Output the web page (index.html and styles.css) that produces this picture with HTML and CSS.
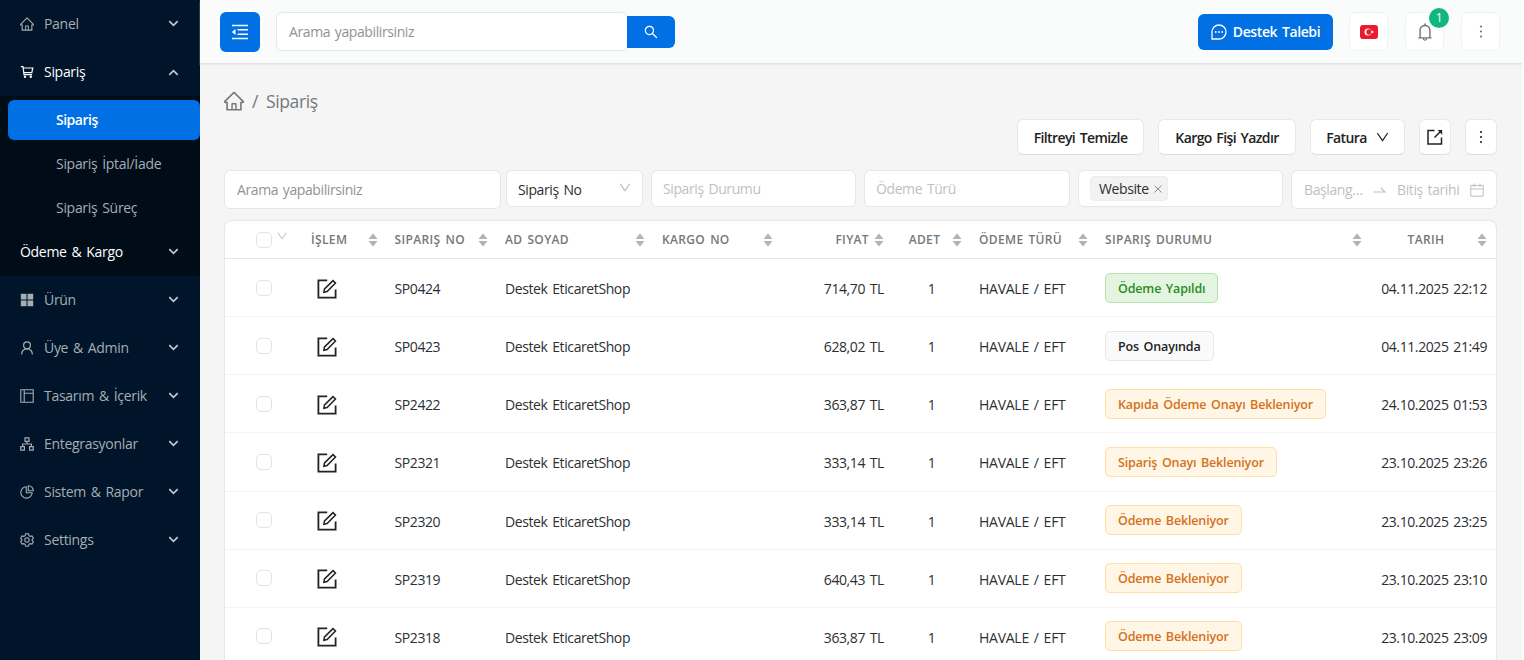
FILE: index.html
```
<!DOCTYPE html>
<html lang="tr">
<head>
  <meta charset="UTF-8" />
  <title>Sipariş</title>
  <link rel="stylesheet" href="styles.css">
</head>
<body>
  <!-- Shared icons -->
  <svg class="sprite">
    <symbol id="home" viewBox="64 64 896 896"><path fill="currentColor" d="M946.5 505L560.1 118.8l-25.9-25.9a31.5 31.5 0 00-44.4 0L77.5 505a63.9 63.9 0 00-18.8 46c.4 35.2 29.7 63.3 64.9 63.3h42.5V940h691.8V614.3h43.4c17.1 0 33.2-6.7 45.3-18.8a63.6 63.6 0 0018.7-45.3c0-17-6.7-33.1-18.8-45.2zM568 868H456V664h112v204zm217.9-325.7V868H632V640c0-22.1-17.9-40-40-40H432c-22.1 0-40 17.9-40 40v228H238.1V542.3h-96l370-369.7 23.1 23.1L882 542.3h-96.1z"/></symbol>
    <symbol id="search" viewBox="64 64 896 896"><path fill="currentColor" d="M909.6 854.5L649.9 594.8C690.2 542.7 712 479 712 412c0-80.2-31.3-155.4-87.9-212.1-56.6-56.7-132-87.9-212.1-87.9s-155.5 31.3-212.1 87.9C143.2 256.5 112 331.8 112 412c0 80.1 31.3 155.5 87.9 212.1C256.5 680.8 331.8 712 412 712c67 0 130.6-21.8 182.7-62l259.7 259.6a8.2 8.2 0 0011.6 0l43.6-43.5a8.2 8.2 0 000-11.6zM570.4 570.4C528 612.7 471.8 636 412 636s-116-23.3-158.4-65.6C211.3 528 188 471.8 188 412s23.3-116.1 65.6-158.4C296 211.3 352.2 188 412 188s116.1 23.2 158.4 65.6S636 352.2 636 412s-23.3 116.1-65.6 158.4z"/></symbol>
    <symbol id="bell" viewBox="64 64 896 896"><path fill="currentColor" d="M816 768h-24V428c0-141.1-104.3-257.8-240-277.2V112c0-22.1-17.9-40-40-40s-40 17.9-40 40v38.8C336.3 170.2 232 286.9 232 428v340h-24c-17.7 0-32 14.3-32 32v32c0 4.4 3.6 8 8 8h216c0 61.8 50.2 112 112 112s112-50.2 112-112h216c4.4 0 8-3.6 8-8v-32c0-17.7-14.3-32-32-32zM512 888c-26.5 0-48-21.5-48-48h96c0 26.5-21.5 48-48 48zM304 768V428c0-55.6 21.6-107.8 60.9-147.1S456.4 220 512 220c55.6 0 107.8 21.6 147.1 60.9S720 372.4 720 428v340H304z"/></symbol>
    <symbol id="chevron" viewBox="0 0 10 7"><path class="line" stroke-width="1.7" d="M.8 1.2 5 5.3 9.2 1.2"/></symbol>
    <symbol id="down" viewBox="0 0 12 10"><path class="line" stroke-width="1.2" d="M.8 1 6 8.6 11.2 1"/></symbol>
    <symbol id="more" viewBox="0 0 4 14"><g fill="currentColor"><circle cx="2" cy="2" r="1.1"/><circle cx="2" cy="7" r="1.1"/><circle cx="2" cy="12" r="1.1"/></g></symbol>
    <symbol id="edit" viewBox="0 0 20 20"><path class="line" stroke-width="1.8" d="M10.2 1.4H1.4v17.2h17.2V10.4"/><path class="line" stroke-width="1.5" d="M6.9 13.2 7.5 9.9 16 1.6 18.5 4 10.1 12.6Z"/></symbol>
    <symbol id="sorter" viewBox="0 0 10 14"><path fill="currentColor" d="M5 .5 9.5 6H.5zM5 13.5.5 8h9z"/></symbol>
  </svg>

  <aside class="sidebar">
    <div class="menu-item">
      <svg class="menu-icon"><use href="#home"/></svg>
      <span>Panel</span>
      <svg class="arrow"><use href="#chevron"/></svg>
    </div>
    <div class="menu-item open">
      <svg class="menu-icon" viewBox="0 0 14 14"><path class="line" stroke-width="1.2" d="M.8 1.6H3l1 8h8.1M3.2 3h9.6l-1 4.6H3.8"/><circle fill="currentColor" cx="5" cy="11.8" r="1.2"/><circle fill="currentColor" cx="10.8" cy="11.8" r="1.2"/></svg>
      <span>Sipariş</span>
      <svg class="arrow"><use href="#chevron"/></svg>
    </div>
    <div class="submenu">
      <a class="active">Sipariş</a>
      <a>Sipariş İptal/İade</a>
      <a>Sipariş Süreç</a>
      <div class="menu-item group">
        <span>Ödeme &amp; Kargo</span>
        <svg class="arrow"><use href="#chevron"/></svg>
      </div>
    </div>
    <div class="menu-item">
      <svg class="menu-icon" viewBox="0 0 14 14"><path fill="currentColor" d="M.8.8h5.700v5.700H.8zM7.500.8h5.700v5.700H7.500zM.8 7.500h5.700v5.700H.8zM7.500 7.500h5.700v5.700H7.500z"/></svg>
      <span>Ürün</span>
      <svg class="arrow"><use href="#chevron"/></svg>
    </div>
    <div class="menu-item">
      <svg class="menu-icon" viewBox="0 0 14 14"><circle class="line" stroke-width="1.200" cx="7" cy="4.300" r="3.400"/><path class="line" stroke-width="1.200" d="M1.600 13.500C1.800 10 4 7.800 7 7.800s5.200 2.200 5.400 5.700"/></svg>
      <span>Üye &amp; Admin</span>
      <svg class="arrow"><use href="#chevron"/></svg>
    </div>
    <div class="menu-item">
      <svg class="menu-icon" viewBox="0 0 14 14"><path class="line" stroke-width="1.100" d="M.8.8h12.400v12.400H.8zM4.200.8v12.400M4.200 4.200h9"/></svg>
      <span>Tasarım &amp; İçerik</span>
      <svg class="arrow"><use href="#chevron"/></svg>
    </div>
    <div class="menu-item">
      <svg class="menu-icon" viewBox="0 0 14 14"><path class="line" stroke-width="1.200" d="M5 .8h4v3.600H5zM.8 9.600h3.600v3.600H.8zM9.600 9.600h3.600v3.600H9.600zM7 4.400V7M2.600 9.600V7h8.800v2.600"/></svg>
      <span>Entegrasyonlar</span>
      <svg class="arrow"><use href="#chevron"/></svg>
    </div>
    <div class="menu-item">
      <svg class="menu-icon" viewBox="0 0 14 14"><path class="line" stroke-width="1.100" d="M6.300 1.700A5.700 5.700 0 1 0 12.200 7.800H6.300zM8.300.7v5h5A5 5 0 0 0 8.300.7z"/></svg>
      <span>Sistem &amp; Rapor</span>
      <svg class="arrow"><use href="#chevron"/></svg>
    </div>
    <div class="menu-item">
      <svg class="menu-icon" viewBox="0 0 14 14"><path class="line" stroke-width="1.100" d="M5.600.8h2.800l.5 1.800 1.300.8 1.800-.5 1.400 2.400L12.100 6.600v.8l1.300 1.300L12 11.100l-1.800-.5-1.300.8-.5 1.800H5.600l-.5-1.800-1.300-.8-1.800.5L.6 8.700l1.300-1.300v-.8L.6 5.300 2 2.900l1.800.5 1.300-.8z"/><circle class="line" stroke-width="1.100" cx="7" cy="7" r="2.200"/></svg>
      <span>Settings</span>
      <svg class="arrow"><use href="#chevron"/></svg>
    </div>
  </aside>

  <main class="main">
    <header class="topbar">
      <button class="toggle">
        <svg width="18" height="16" viewBox="0 0 18 16"><path class="line" stroke-width="1.500" d="M1 1.500h16M6.500 5.800H17M6.500 10.200H17M1 14.500h16"/><path fill="currentColor" d="M4.500 5v6L.8 8z"/></svg>
      </button>
      <div class="search">
        <input type="text" placeholder="Arama yapabilirsiniz" />
        <button><svg width="14" height="14"><use href="#search"/></svg></button>
      </div>
      <button class="support">
        <svg width="16" height="16" viewBox="0 0 16 16"><path class="line" stroke-width="1.300" d="M1 15V8a7 7 0 1 1 7 7z"/><g fill="currentColor"><circle cx="4.800" cy="8" r=".9"/><circle cx="8" cy="8" r=".9"/><circle cx="11.200" cy="8" r=".9"/></g></svg>
        <span>Destek Talebi</span>
      </button>
      <button class="square">
        <svg width="18" height="14" viewBox="0 0 18 14"><rect width="18" height="14" rx="3" fill="#e81c2e"/><circle cx="8" cy="7" r="3.500" fill="#fff"/><circle cx="9" cy="7" r="2.700" fill="#e81c2e"/><path fill="#fff" d="m10.300 7 1.300-.5.1-1.200.8 1 1.200-.3-.7 1 .7 1-1.200-.3-.8 1-.1-1.200z"/></svg>
      </button>
      <button class="square">
        <svg width="18" height="18"><use href="#bell"/></svg>
        <span class="badge">1</span>
      </button>
      <button class="square">
        <svg width="4" height="15"><use href="#more"/></svg>
      </button>
    </header>

    <div class="content">
      <div class="breadcrumb">
        <svg width="20" height="20"><use href="#home"/></svg>
        <span>/</span>
        <span>Sipariş</span>
      </div>

      <div class="actions">
        <button class="clear">Filtreyi Temizle</button>
        <button class="print">Kargo Fişi Yazdır</button>
        <button class="invoice">Fatura <svg width="13" height="10"><use href="#down"/></svg></button>
        <button class="small">
          <svg width="16" height="16" viewBox="0 0 16 16"><path class="line" stroke-width="1.500" d="M7.500 1.500H1v13.500h13.500V8.500M7.500 8.500 13 3"/><path fill="currentColor" d="M10.500 1h4.700v4.700z"/></svg>
        </button>
        <button class="small"><svg width="4" height="14"><use href="#more"/></svg></button>
      </div>

      <div class="filters">
        <input class="field" type="text" placeholder="Arama yapabilirsiniz" />
        <div class="field order-no"><span>Sipariş No</span><svg width="12" height="9"><use href="#down"/></svg></div>
        <div class="field select">Sipariş Durumu</div>
        <div class="field select">Ödeme Türü</div>
        <div class="field select tags">
          <span class="tag">Website <svg width="8" height="8" viewBox="0 0 8 8"><path class="line" d="m.5.5 7 7m0-7-7 7"/></svg></span>
        </div>
        <div class="field dates">
          <span>Başlang…</span>
          <svg width="13" height="6" viewBox="0 0 13 6"><path class="line" stroke-width="1.200" d="M0 5h12L8 1"/></svg>
          <span>Bitiş tarihi</span>
          <svg width="14" height="14" viewBox="0 0 14 14"><path class="line" d="M.8 2.400h12.400v10.800H.8zM.8 6h12.400M4 .5v3.500M10 .5v3.500"/></svg>
        </div>
      </div>

      <div class="card">
        <table class="orders">
          <colgroup>
            <col class="c-check"><col class="c-edit"><col class="c-no"><col class="c-name"><col class="c-cargo">
            <col class="c-price"><col class="c-count"><col class="c-payment"><col class="c-status"><col class="c-date">
          </colgroup>
          <thead>
            <tr>
              <th><div class="check-all"><span class="checkbox"></span><svg width="12" height="8"><use href="#down"/></svg></div></th>
              <th><div class="head"><span>İŞLEM</span><svg class="sorter"><use href="#sorter"/></svg></div></th>
              <th><div class="head"><span>SIPARIŞ NO</span><svg class="sorter"><use href="#sorter"/></svg></div></th>
              <th><div class="head"><span>AD SOYAD</span><svg class="sorter"><use href="#sorter"/></svg></div></th>
              <th><div class="head"><span>KARGO NO</span><svg class="sorter"><use href="#sorter"/></svg></div></th>
              <th><div class="head right"><span>FIYAT</span><svg class="sorter"><use href="#sorter"/></svg></div></th>
              <th><div class="head center"><span>ADET</span><svg class="sorter"><use href="#sorter"/></svg></div></th>
              <th><div class="head"><span>ÖDEME TÜRÜ</span><svg class="sorter"><use href="#sorter"/></svg></div></th>
              <th><div class="head"><span>SIPARIŞ DURUMU</span><svg class="sorter"><use href="#sorter"/></svg></div></th>
              <th><div class="head center"><span>TARIH</span><svg class="sorter"><use href="#sorter"/></svg></div></th>
            </tr>
          </thead>
          <tbody id="orderRows"></tbody>
        </table>
      </div>
    </div>
  </main>

  <script>
    const orders = [
      { no: 'SP0424', price: '714,70', status: 'Ödeme Yapıldı', type: 'paid', date: '04.11.2025 22:12' },
      { no: 'SP0423', price: '628,02', status: 'Pos Onayında', type: 'pos', date: '04.11.2025 21:49' },
      { no: 'SP2422', price: '363,87', status: 'Kapıda Ödeme Onayı Bekleniyor', type: 'waiting', date: '24.10.2025 01:53' },
      { no: 'SP2321', price: '333,14', status: 'Sipariş Onayı Bekleniyor', type: 'waiting', date: '23.10.2025 23:26' },
      { no: 'SP2320', price: '333,14', status: 'Ödeme Bekleniyor', type: 'waiting', date: '23.10.2025 23:25' },
      { no: 'SP2319', price: '640,43', status: 'Ödeme Bekleniyor', type: 'waiting', date: '23.10.2025 23:10' },
      { no: 'SP2318', price: '363,87', status: 'Ödeme Bekleniyor', type: 'waiting', date: '23.10.2025 23:09' }
    ];

    document.getElementById('orderRows').innerHTML = orders.map(order => `
      <tr>
        <td class="control"><div class="check-all"><span class="checkbox"></span></div></td>
        <td class="edit"><svg width="20" height="20"><use href="#edit"/></svg></td>
        <td>${order.no}</td>
        <td>Destek EticaretShop</td>
        <td></td>
        <td class="price">${order.price} TL</td>
        <td class="count">1</td>
        <td class="payment">HAVALE / EFT</td>
        <td class="control"><span class="status ${order.type}">${order.status}</span></td>
        <td class="date">${order.date}</td>
      </tr>`).join('');
  </script>
</body>
</html>
```
FILE: styles.css
```
* {
  box-sizing: border-box;
}
body {
  font-family: 'Segoe UI', 'Open Sans', sans-serif;
  font-size: 14px;
  letter-spacing: -0.4px;
  word-spacing: 1.5px;
  color: #2b2f32;
  background-color: #fff;
  margin: 0;
  height: 660px;
  display: flex;
  overflow: hidden;
}
button, input {
  font: inherit;
  letter-spacing: inherit;
  word-spacing: inherit;
  margin: 0;
}
svg {
  flex: none;
  display: block;
}
.sprite {
  display: none;
}
.line {
  fill: none;
  stroke: currentColor;
}

/* Sidebar */
.sidebar {
  width: 200px;
  flex: none;
  background-color: #001529;
  color: #a6adb4;
  letter-spacing: -0.3px;
}
.menu-item {
  height: 48px;
  padding: 0 21px 0 20px;
  display: flex;
  align-items: center;
  gap: 10px;
}
.menu-item span {
  flex: 1;
  padding-bottom: 2px;
  white-space: nowrap;
}
.menu-icon {
  width: 14px;
  height: 14px;
}
.arrow {
  width: 11px;
  height: 7px;
  margin-top: -2px;
  color: #c3c8cd;
}
.menu-item.open, .menu-item.group {
  color: #fff;
}
.open .arrow {
  transform: rotate(180deg);
  margin-top: 0;
}
.submenu {
  background-color: #000c17;
  padding-top: 4px;
}
.submenu a {
  display: flex;
  align-items: center;
  height: 40px;
  margin: 0 0 4px 8px;
  padding: 0 0 2px 48px;
  border-radius: 6px;
}
.submenu a:nth-child(3) {
  margin-bottom: 0;
}
.submenu .active {
  background-color: #0070e4;
  color: #fff;
  font-weight: 600;
  letter-spacing: -0.5px;
}

/* Header */
.main {
  width: 1322px;
  background-color: #f5f5f5;
}
.topbar {
  height: 64px;
  padding: 0 22px 0 20px;
  background-color: #fafcfc;
  border-bottom: 1px solid #e2e4e5;
  box-shadow: 0 1px 1px #ececec;
  display: flex;
  align-items: center;
}
.topbar button {
  display: flex;
  align-items: center;
  justify-content: center;
  border: none;
  border-radius: 6px;
  padding: 0;
}
.topbar .toggle {
  width: 40px;
  height: 40px;
  background-color: #0070e4;
  color: #fff;
}
.search {
  display: flex;
  align-items: center;
  margin-left: 16px;
}
.search input {
  width: 352px;
  height: 39px;
  padding: 0 12px;
  border: 1px solid #e6e8e9;
  border-radius: 6px;
}
input::placeholder {
  color: #8f9396;
}
.search button {
  width: 48px;
  height: 32px;
  margin-left: -1px;
  background-color: #0070e4;
  color: #fff;
  border-radius: 0 6px 6px 0;
}
.topbar .support {
  width: 135px;
  height: 36px;
  margin-left: auto;
  gap: 6px;
  background-color: #0070e4;
  color: #fff;
  font-weight: 600;
}
.topbar .square {
  position: relative;
  width: 39px;
  height: 39px;
  margin-left: 17px;
  border: 1px solid #f1f3f3;
  background-color: #fff;
  color: #74787b;
}
.badge {
  position: absolute;
  top: -5px;
  right: -6px;
  width: 20px;
  height: 20px;
  border-radius: 50%;
  background-color: #12b77f;
  color: #fff;
  font-size: 12px;
  line-height: 20px;
  text-align: center;
}
.support + .square {
  margin-left: 16px;
}

/* Page content */
.content {
  padding: 26px 25px 0 24px;
}
.breadcrumb {
  display: flex;
  align-items: center;
  gap: 8px;
  height: 22px;
  font-size: 17.5px;
  color: #74787b;
}
.actions {
  display: flex;
  justify-content: flex-end;
  gap: 14px;
  margin-top: 7px;
}
.actions button {
  height: 36px;
  padding: 0;
  display: flex;
  align-items: center;
  justify-content: center;
  gap: 9px;
  border: 1px solid #e8e8e8;
  border-bottom-color: #dfdfdf;
  border-radius: 6px;
  background-color: #fff;
  color: #222;
  font-weight: 600;
  letter-spacing: -0.6px;
}
.actions .clear {
  width: 127px;
}
.actions .print {
  width: 138px;
}
.actions .invoice {
  width: 95px;
}
.actions .small {
  width: 32px;
}
.filters {
  display: grid;
  grid-template-columns: 277px 134px 205px 206px 205px 206px;
  column-gap: 8px;
  align-items: start;
  margin-top: 15px;
}
.field {
  min-width: 0;
  height: 37px;
  padding: 0 11px;
  border: 1px solid #e6e6e6;
  border-radius: 6px;
  background-color: #fff;
  display: flex;
  align-items: center;
  white-space: nowrap;
}
input.field, .dates {
  height: 39px;
}
input.field, .dates {
  padding: 0 12px;
}
.order-no {
  margin-left: -3px;
  justify-content: space-between;
}
.order-no span {
  padding-top: 2px;
}
.order-no svg {
  margin-top: -2px;
  color: #b9b9b9;
}
.select, .dates {
  color: #bfbfbf;
}
.tag {
  display: flex;
  align-items: center;
  gap: 5px;
  height: 25px;
  padding: 0 5px 0 8px;
  border: 1px solid #ededed;
  border-radius: 4px;
  background-color: #f2f2f2;
  color: #2b2f32;
}
.tag svg {
  color: #8c8c8c;
}
.dates {
  justify-content: space-between;
}

/* Orders table */
.card {
  margin-top: 11px;
  border: 1px solid #e8e8e8;
  border-radius: 8px;
  background-color: #fff;
}
.orders {
  width: 100%;
  table-layout: fixed;
  border-collapse: separate;
  border-spacing: 0;
}
.c-check { width: 78px; }
.c-edit { width: 83.5px; }
.c-no { width: 110.5px; }
.c-name { width: 157px; }
.c-cargo { width: 127.5px; }
.c-price { width: 111.5px; }
.c-count { width: 78px; }
.c-payment { width: 126px; }
.c-status { width: 274px; }
th, td {
  padding: 0 9px 0 8px;
  text-align: left;
  white-space: nowrap;
}
th {
  height: 38px;
  border-bottom: 1px solid #e6e6e6;
  color: #74787b;
  font-size: 12px;
  font-weight: 600;
  letter-spacing: 0.35px;
}
td {
  height: 58.15px;
  padding-top: 2px;
  border-bottom: 1px solid #f3f3f3;
}
td.control {
  padding-top: 0;
}
.head {
  display: flex;
  align-items: center;
  justify-content: space-between;
}
.head.right {
  justify-content: flex-end;
  gap: 5px;
}
.head.center span {
  flex: 1;
  padding-right: 4px;
  text-align: center;
}
.sorter {
  width: 10px;
  height: 14px;
  color: #b3b3b3;
}
.check-all {
  display: flex;
  gap: 4px;
  padding-left: 23px;
}
.check-all svg {
  color: #b9b9b9;
}
.checkbox {
  width: 16px;
  height: 16px;
  border: 1px solid #e2e2e2;
  border-radius: 5px;
  background-color: #fff;
}
td.edit {
  padding-left: 14px;
  color: #222;
}
.price, .date {
  text-align: right;
}
.count {
  text-align: center;
}
.payment {
  letter-spacing: -0.25px;
}
.status {
  display: inline-block;
  height: 30px;
  padding: 0 12px;
  border: 1px solid;
  border-radius: 5px;
  font-size: 12.5px;
  font-weight: 600;
  line-height: 29px;
  letter-spacing: -0.15px;
  vertical-align: middle;
}
.paid {
  background-color: #e3f5e1;
  border-color: #b4e2b0;
  color: #2a8c24;
}
.pos {
  background-color: #fafafa;
  border-color: #e8e8e8;
  color: #222;
}
.waiting {
  background-color: #fff6e5;
  border-color: #ffdfa6;
  color: #d5711b;
}
```
